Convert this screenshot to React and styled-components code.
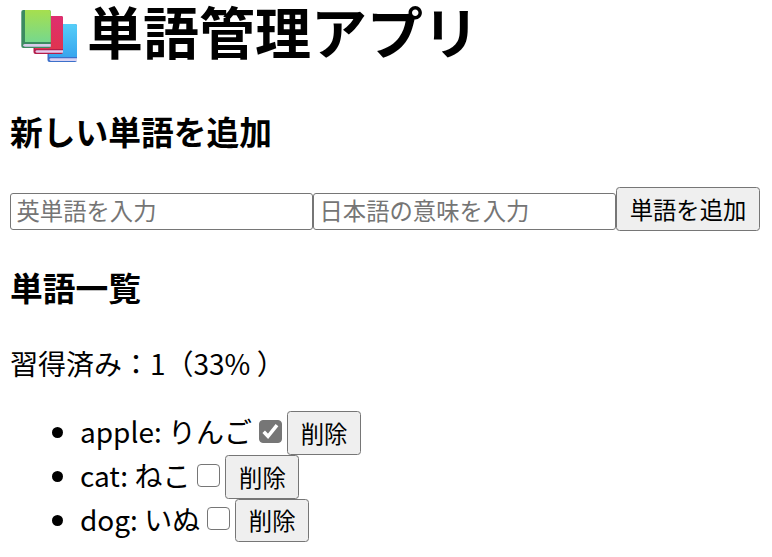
import React, { useState } from "react";
import styled, { createGlobalStyle } from "styled-components";

const GlobalStyle = createGlobalStyle`
  body {
    margin: 0;
    background: #fff;
    color: #000;
  }
`;

const Page = styled.main`
  display: flex;
  flex-direction: column;
  padding: 0 0 0 10px;
  font: 28px/40px "Noto Sans CJK JP", sans-serif;
`;

const Title = styled.h1`
  display: flex;
  align-items: center;
  height: 60px;
  margin: 0;
  font-size: 56px;
  line-height: 60px;
  white-space: nowrap;
`;

const Books = styled.svg`
  flex: none;
  width: 58px;
  height: 54px;
  margin: 12px 9px 0 10px;
`;

const Heading = styled.h3`
  height: 48px;
  margin: ${(p) => p.$top}px 0 0;
  font-size: 32.76px;
  line-height: 48px;
`;

const Form = styled.form`
  display: flex;
  align-items: center;
  height: 44px;
  margin-top: 32px;
`;

const WordInput = styled.input`
  box-sizing: border-box;
  width: 303px;
  height: 37px;
  margin: 5px 0 0;
  padding: 0 5.5px 3px;
  border: 1px solid #767676;
  border-radius: 3px;
  background: #fff;
  font: 23.33px "Noto Sans CJK JP", sans-serif;
  &::placeholder {
    color: #757575;
  }
`;

const Button = styled.button`
  box-sizing: border-box;
  flex: none;
  width: ${(p) => p.$width}px;
  height: 43.75px;
  padding: 0;
  border: 1px solid #767676;
  border-radius: 3.5px;
  background: #efefef;
  color: #000;
  font: 23.33px/40px "Noto Sans CJK JP", sans-serif;
`;

const Summary = styled.p`
  height: 40px;
  margin: 32px 0 0;
`;

const WordList = styled.ul`
  margin: 28px 0 0;
  padding: 0 0 0 70px;
`;

const WordItem = styled.li`
  display: flex;
  align-items: center;
  height: 43.75px;
  &::before {
    content: "";
    width: 11px;
    height: 11px;
    margin: 0 17px 0 -28px;
    border-radius: 50%;
    background: #000;
  }
`;

const WordText = styled.span`
  padding-bottom: 3px;
`;

const Check = styled.input`
  appearance: none;
  box-sizing: border-box;
  grid-area: 1 / 1;
  width: 23px;
  height: 23px;
  margin: 0;
  border: 1.75px solid #767676;
  border-radius: 4px;
  background: #fff;
  &:checked {
    background: #767676;
  }
`;

const CheckBox = styled.label`
  display: grid;
  margin: -3px 5px 0 7px;
`;

const Tick = styled.svg`
  grid-area: 1 / 1;
  width: 23px;
  height: 23px;
  pointer-events: none;
`;

const initialWords = [
  { en: "apple", ja: "りんご", learned: true },
  { en: "cat", ja: "ねこ", learned: false },
  { en: "dog", ja: "いぬ", learned: false },
];

function BooksIcon() {
  return (
    <Books viewBox="0 0 58 54" aria-hidden="true">
      <defs>
        <linearGradient id="green" x2="0" y2="1">
          <stop stopColor="#a6df4e" />
          <stop offset="1" stopColor="#76d88d" />
        </linearGradient>
        <linearGradient id="red" x2="0" y2="1">
          <stop stopColor="#df2e70" />
          <stop offset="1" stopColor="#e0344f" />
        </linearGradient>
        <linearGradient id="blue" x2="0" y2="1">
          <stop stopColor="#56cef8" />
          <stop offset="1" stopColor="#38a5ee" />
        </linearGradient>
      </defs>
      <rect x="27.5" y="15" width="29.5" height="38" rx="2" fill="#3c70ca" />
      <path d="M31 15h24q2 0 2 2v31H29V17q0-2 2-2z" fill="url(#blue)" />
      <path d="M57 49.3H31q-1.5 0-1.5 1.3T31 51.9h26z" fill="#d8d2f3" />
      <rect x="13.5" y="7" width="29.5" height="38" rx="2" fill="#b41c4a" />
      <path d="M17 7h24q2 0 2 2v31H15V9q0-2 2-2z" fill="url(#red)" />
      <path d="M43 41.2H17q-1.5 0-1.5 1.3t1.5 1.3h26z" fill="#e4cced" />
      <rect x="1.3" y="1" width="29.5" height="38" rx="2" fill="#3c8b61" />
      <path d="M5 1h23.8q2 0 2 2v30H5z" fill="url(#green)" />
      <path d="M30.8 35H5q-1.8 0-1.8 1.3T5 37.7h25.8z" fill="#d8cce9" />
    </Books>
  );
}

export default function App() {
  const [words, setWords] = useState(initialWords);
  const [en, setEn] = useState("");
  const [ja, setJa] = useState("");
  const learned = words.filter((w) => w.learned).length;
  const rate = words.length ? Math.round((learned / words.length) * 100) : 0;

  const addWord = (e) => {
    e.preventDefault();
    if (!en || !ja) return;
    setWords([...words, { en, ja, learned: false }]);
    setEn("");
    setJa("");
  };
  const toggle = (index) =>
    setWords(words.map((w, i) => (i === index ? { ...w, learned: !w.learned } : w)));

  return (
    <>
      <GlobalStyle />
      <Page>
        <Title>
          <BooksIcon />
          単語管理アプリ
        </Title>
        <Heading $top={47}>新しい単語を追加</Heading>
        <Form onSubmit={addWord}>
          <WordInput placeholder="英単語を入力" value={en} onChange={(e) => setEn(e.target.value)} />
          <WordInput placeholder="日本語の意味を入力" value={ja} onChange={(e) => setJa(e.target.value)} />
          <Button $width={144}>単語を追加</Button>
        </Form>
        <Heading $top={32}>単語一覧</Heading>
        <Summary>{`習得済み：${learned}（${rate}% ）`}</Summary>
        <WordList>
          {words.map((word, i) => (
            <WordItem key={word.en}>
              <WordText>{`${word.en}: ${word.ja}`}</WordText>
              <CheckBox>
                <Check type="checkbox" checked={word.learned} onChange={() => toggle(i)} />
                {word.learned && (
                  <Tick viewBox="0 0 23 23">
                    <path d="M4.7 11.7l4.3 4.6L18 5.2" fill="none" stroke="#fff" strokeWidth="3.5" />
                  </Tick>
                )}
              </CheckBox>
              <Button $width={74} onClick={() => setWords(words.filter((_, n) => n !== i))}>
                削除
              </Button>
            </WordItem>
          ))}
        </WordList>
      </Page>
    </>
  );
}
